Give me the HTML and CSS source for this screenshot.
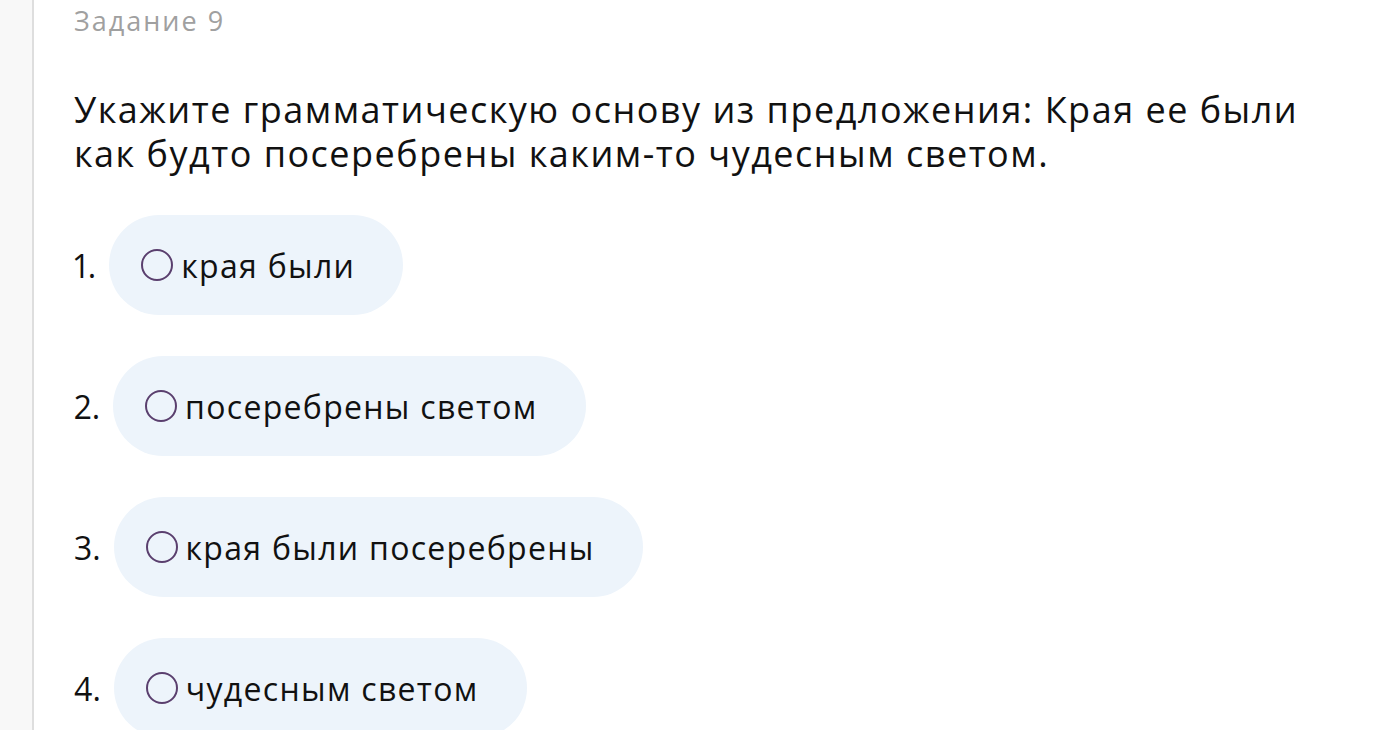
FILE: index.html
```html
<!DOCTYPE html>
<html lang="ru">
<head>
    <meta charset="UTF-8">
    <meta name="viewport" content="width=device-width, initial-scale=1.0">
    <title>Задание 9</title>
    <link rel="stylesheet" href="styles.css">
</head>
<body>
    <div class="rail"></div>
    <div class="task">
        <div class="task-title">Задание 9</div>
        <div class="question">Укажите грамматическую основу из предложения: Края ее были как будто посеребрены каким-то чудесным светом.</div>

        <div class="options">
            <label class="option">
                <span class="num">1.</span>
                <span class="pill"><input type="radio" name="answer"><span class="circle"></span>края были</span>
            </label>
            <label class="option">
                <span class="num">2.</span>
                <span class="pill"><input type="radio" name="answer"><span class="circle"></span>посеребрены светом</span>
            </label>
            <label class="option">
                <span class="num">3.</span>
                <span class="pill"><input type="radio" name="answer"><span class="circle"></span>края были посеребрены</span>
            </label>
            <label class="option">
                <span class="num">4.</span>
                <span class="pill"><input type="radio" name="answer"><span class="circle"></span>чудесным светом</span>
            </label>
        </div>
    </div>
</body>
</html>
```

FILE: styles.css
```css
body {
    margin: 0;
    padding: 0;
    display: flex;
    min-height: 100vh;
    background: white;
    font-family: 'Open Sans', 'Noto Sans', sans-serif;
    color: #111;
    overflow: hidden;
}

.rail {
    width: 32px;
    flex-shrink: 0;
    background-color: #f8f8f8;
    border-right: 2px solid #dedede;
}

.task {
    padding-left: 40px;
    padding-right: 60px;
}

.task-title {
    font-size: 27px;
    letter-spacing: 2px;
    color: #a0a0a0;
    line-height: 42px;
}

.question {
    margin-top: 46px;
    font-size: 36px;
    line-height: 44px;
    letter-spacing: 1.5px;
    max-width: 1250px;
}

.options {
    display: flex;
    flex-direction: column;
    gap: 41px;
    margin-top: 39px;
}

.option {
    display: flex;
    align-items: center;
    gap: 13px;
    cursor: pointer;
}

.num {
    font-size: 32px;
    font-variant-numeric: proportional-nums;
}

.pill {
    display: flex;
    align-items: center;
    gap: 8px;
    height: 100px;
    padding: 0 48px 0 32px;
    background-color: #edf4fb;
    border-radius: 50px;
    font-size: 32px;
    letter-spacing: 1.3px;
}

.pill input {
    display: none;
}

.circle {
    width: 28px;
    height: 28px;
    border: 2px solid #5a3f6e;
    border-radius: 50%;
}
```
